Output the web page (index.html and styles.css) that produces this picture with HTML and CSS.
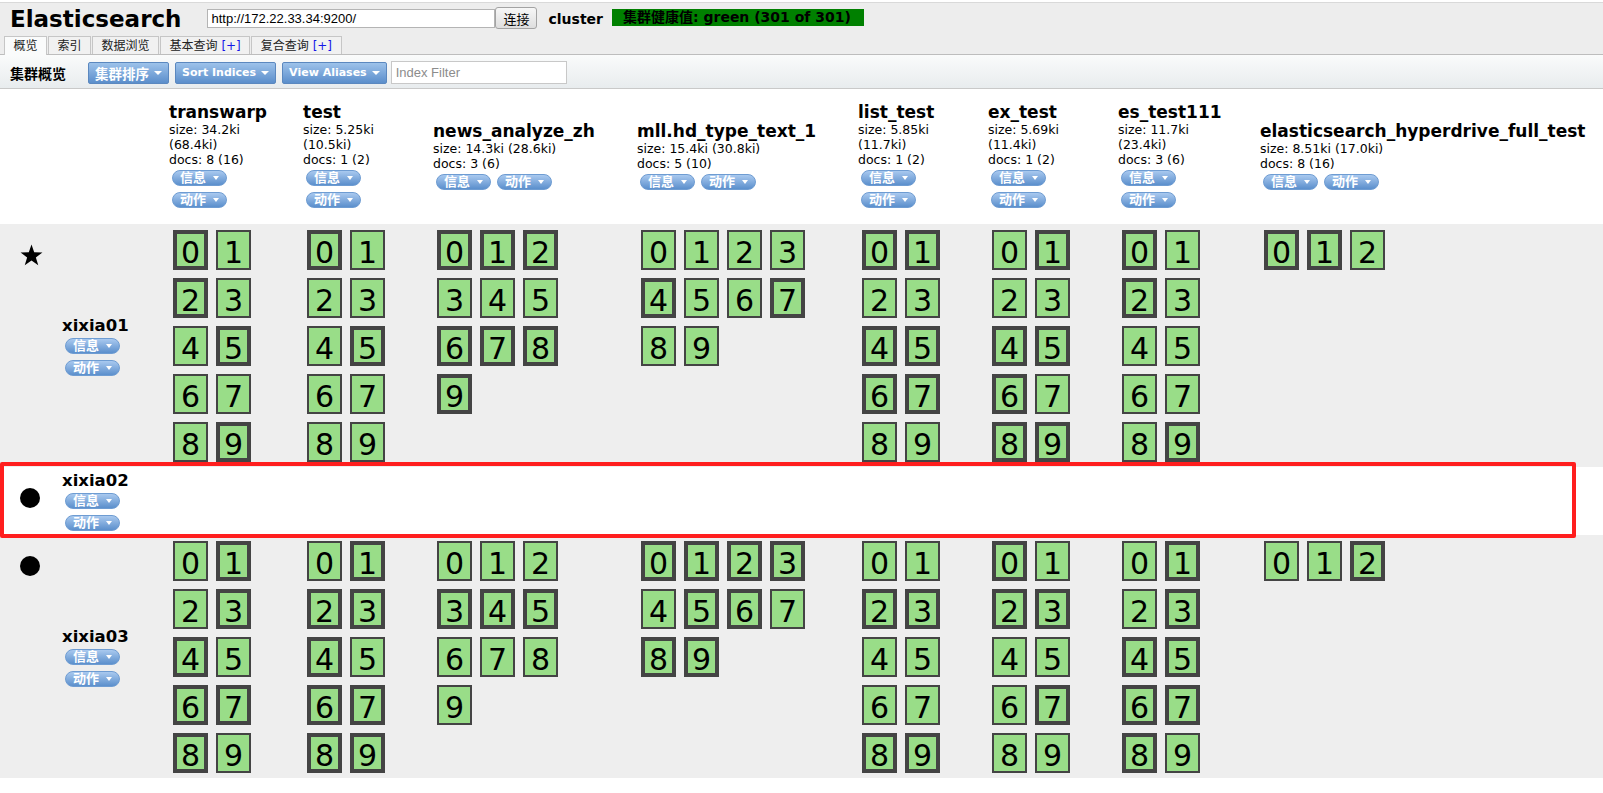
FILE: index.html
```html
<!DOCTYPE html>
<html lang="zh">
<head>
<meta charset="utf-8">
<title>Elasticsearch</title>
<link rel="stylesheet" href="styles.css">
</head>
<body>
<header class="app-header">
  <div class="header-top">
    <h1 class="logo">Elasticsearch</h1>
    <input class="url-input" type="text" value="http://172.22.33.34:9200/">
    <button class="connect-btn">连接</button>
    <span class="cluster-name">cluster</span>
    <span class="health">集群健康值: green (301 of 301)</span>
  </div>
  <nav class="tabs">
    <span class="tab active">概览</span>
    <span class="tab">索引</span>
    <span class="tab">数据浏览</span>
    <span class="tab">基本查询 <span class="plus">[+]</span></span>
    <span class="tab">复合查询 <span class="plus">[+]</span></span>
  </nav>
</header>

<div class="toolbar">
  <span class="toolbar-title">集群概览</span>
  <span class="tb-btn"><span class="tb-cjk">集群排序</span><i class="caret"></i></span>
  <span class="tb-btn">Sort Indices<i class="caret"></i></span>
  <span class="tb-btn">View Aliases<i class="caret"></i></span>
  <input class="filter" type="text" placeholder="Index Filter">
</div>

<main class="overview">
  <div class="ov-row ov-head">
    <div></div>
    <div></div>
    <div class="ix-head w2">
      <div class="ix-name">transwarp</div>
      <div class="ix-stat">size: 34.2ki (68.4ki)</div>
      <div class="ix-stat">docs: 8 (16)</div>
      <div class="pills"><span class="pill">信息<i class="caret"></i></span><span class="pill">动作<i class="caret"></i></span></div>
    </div>
    <div class="ix-head w2">
      <div class="ix-name">test</div>
      <div class="ix-stat">size: 5.25ki (10.5ki)</div>
      <div class="ix-stat">docs: 1 (2)</div>
      <div class="pills"><span class="pill">信息<i class="caret"></i></span><span class="pill">动作<i class="caret"></i></span></div>
    </div>
    <div class="ix-head w3">
      <div class="ix-name">news_analyze_zh</div>
      <div class="ix-stat">size: 14.3ki (28.6ki)</div>
      <div class="ix-stat">docs: 3 (6)</div>
      <div class="pills"><span class="pill">信息<i class="caret"></i></span><span class="pill">动作<i class="caret"></i></span></div>
    </div>
    <div class="ix-head w4">
      <div class="ix-name">mll.hd_type_text_1</div>
      <div class="ix-stat">size: 15.4ki (30.8ki)</div>
      <div class="ix-stat">docs: 5 (10)</div>
      <div class="pills"><span class="pill">信息<i class="caret"></i></span><span class="pill">动作<i class="caret"></i></span></div>
    </div>
    <div class="ix-head w2">
      <div class="ix-name">list_test</div>
      <div class="ix-stat">size: 5.85ki (11.7ki)</div>
      <div class="ix-stat">docs: 1 (2)</div>
      <div class="pills"><span class="pill">信息<i class="caret"></i></span><span class="pill">动作<i class="caret"></i></span></div>
    </div>
    <div class="ix-head w2">
      <div class="ix-name">ex_test</div>
      <div class="ix-stat">size: 5.69ki (11.4ki)</div>
      <div class="ix-stat">docs: 1 (2)</div>
      <div class="pills"><span class="pill">信息<i class="caret"></i></span><span class="pill">动作<i class="caret"></i></span></div>
    </div>
    <div class="ix-head w2">
      <div class="ix-name">es_test111</div>
      <div class="ix-stat">size: 11.7ki (23.4ki)</div>
      <div class="ix-stat">docs: 3 (6)</div>
      <div class="pills"><span class="pill">信息<i class="caret"></i></span><span class="pill">动作<i class="caret"></i></span></div>
    </div>
    <div class="ix-head w3">
      <div class="ix-name">elasticsearch_hyperdrive_full_test</div>
      <div class="ix-stat">size: 8.51ki (17.0ki)</div>
      <div class="ix-stat">docs: 8 (16)</div>
      <div class="pills"><span class="pill">信息<i class="caret"></i></span><span class="pill">动作<i class="caret"></i></span></div>
    </div>
  </div>

  <div class="ov-row ov-node shaded">
    <div class="node-icon"><svg class="star" width="23" height="22" viewBox="0 0 23 22"><polygon points="11.5,0.5 14.2,8.28 22.44,8.45 15.87,13.42 18.26,21.3 11.5,16.6 4.74,21.3 7.13,13.42 0.56,8.45 8.8,8.28"/></svg></div>
    <div class="node-cell">
      <div class="node-name">xixia01</div>
      <span class="pill">信息<i class="caret"></i></span>
      <span class="pill">动作<i class="caret"></i></span>
    </div>
    <div class="shards c2"><span class="shard p">0</span><span class="shard">1</span><span class="shard p">2</span><span class="shard">3</span><span class="shard">4</span><span class="shard p">5</span><span class="shard">6</span><span class="shard">7</span><span class="shard">8</span><span class="shard p">9</span></div>
    <div class="shards c2"><span class="shard p">0</span><span class="shard">1</span><span class="shard">2</span><span class="shard">3</span><span class="shard">4</span><span class="shard p">5</span><span class="shard">6</span><span class="shard">7</span><span class="shard">8</span><span class="shard">9</span></div>
    <div class="shards c3"><span class="shard p">0</span><span class="shard p">1</span><span class="shard p">2</span><span class="shard">3</span><span class="shard">4</span><span class="shard">5</span><span class="shard p">6</span><span class="shard p">7</span><span class="shard p">8</span><span class="shard p">9</span></div>
    <div class="shards c4"><span class="shard">0</span><span class="shard">1</span><span class="shard">2</span><span class="shard">3</span><span class="shard p">4</span><span class="shard">5</span><span class="shard">6</span><span class="shard p">7</span><span class="shard">8</span><span class="shard">9</span></div>
    <div class="shards c2"><span class="shard p">0</span><span class="shard p">1</span><span class="shard">2</span><span class="shard">3</span><span class="shard p">4</span><span class="shard p">5</span><span class="shard p">6</span><span class="shard p">7</span><span class="shard">8</span><span class="shard">9</span></div>
    <div class="shards c2"><span class="shard">0</span><span class="shard p">1</span><span class="shard">2</span><span class="shard">3</span><span class="shard p">4</span><span class="shard p">5</span><span class="shard p">6</span><span class="shard">7</span><span class="shard p">8</span><span class="shard p">9</span></div>
    <div class="shards c2"><span class="shard p">0</span><span class="shard">1</span><span class="shard p">2</span><span class="shard">3</span><span class="shard">4</span><span class="shard">5</span><span class="shard">6</span><span class="shard">7</span><span class="shard">8</span><span class="shard p">9</span></div>
    <div class="shards c3"><span class="shard p">0</span><span class="shard p">1</span><span class="shard">2</span></div>
  </div>

  <div class="ov-row ov-node blank">
    <div class="node-icon round"><svg class="dot" width="20" height="20" viewBox="0 0 20 20"><circle cx="10" cy="10" r="10"/></svg></div>
    <div class="node-cell">
      <div class="node-name">xixia02</div>
      <span class="pill">信息<i class="caret"></i></span>
      <span class="pill">动作<i class="caret"></i></span>
    </div>
    <div class="annot"></div>
  </div>

  <div class="ov-row ov-node shaded">
    <div class="node-icon round"><svg class="dot" width="20" height="20" viewBox="0 0 20 20"><circle cx="10" cy="10" r="10"/></svg></div>
    <div class="node-cell">
      <div class="node-name">xixia03</div>
      <span class="pill">信息<i class="caret"></i></span>
      <span class="pill">动作<i class="caret"></i></span>
    </div>
    <div class="shards c2"><span class="shard">0</span><span class="shard p">1</span><span class="shard">2</span><span class="shard p">3</span><span class="shard p">4</span><span class="shard">5</span><span class="shard p">6</span><span class="shard p">7</span><span class="shard p">8</span><span class="shard">9</span></div>
    <div class="shards c2"><span class="shard">0</span><span class="shard p">1</span><span class="shard p">2</span><span class="shard p">3</span><span class="shard p">4</span><span class="shard">5</span><span class="shard p">6</span><span class="shard p">7</span><span class="shard p">8</span><span class="shard p">9</span></div>
    <div class="shards c3"><span class="shard">0</span><span class="shard">1</span><span class="shard">2</span><span class="shard p">3</span><span class="shard p">4</span><span class="shard p">5</span><span class="shard">6</span><span class="shard">7</span><span class="shard">8</span><span class="shard">9</span></div>
    <div class="shards c4"><span class="shard p">0</span><span class="shard p">1</span><span class="shard p">2</span><span class="shard p">3</span><span class="shard">4</span><span class="shard p">5</span><span class="shard p">6</span><span class="shard">7</span><span class="shard p">8</span><span class="shard p">9</span></div>
    <div class="shards c2"><span class="shard">0</span><span class="shard">1</span><span class="shard p">2</span><span class="shard p">3</span><span class="shard">4</span><span class="shard">5</span><span class="shard">6</span><span class="shard">7</span><span class="shard p">8</span><span class="shard p">9</span></div>
    <div class="shards c2"><span class="shard p">0</span><span class="shard">1</span><span class="shard p">2</span><span class="shard p">3</span><span class="shard">4</span><span class="shard">5</span><span class="shard">6</span><span class="shard p">7</span><span class="shard">8</span><span class="shard">9</span></div>
    <div class="shards c2"><span class="shard">0</span><span class="shard p">1</span><span class="shard">2</span><span class="shard p">3</span><span class="shard p">4</span><span class="shard p">5</span><span class="shard p">6</span><span class="shard p">7</span><span class="shard p">8</span><span class="shard">9</span></div>
    <div class="shards c3"><span class="shard">0</span><span class="shard">1</span><span class="shard p">2</span></div>
  </div>
</main>
</body>
</html>
```

FILE: styles.css
```css
* { box-sizing: border-box; }
html, body { margin: 0; padding: 0; }
body {
  padding-top: 2px;
  background: #fff;
  color: #000;
  font-family: "DejaVu Sans", Verdana, "Noto Sans CJK SC", sans-serif;
  font-size: 12px;
}

/* ---------- header ---------- */
.app-header {
  height: 53px;
  background: #ededed;
  border-top: 1px solid #d9d9d9;
  border-bottom: 1px solid #bdbdbd;
}
.header-top {
  display: flex;
  align-items: flex-start;
  height: 33px;
  padding: 2px 0 0 10px;
}
.logo {
  margin: 0 26px 0 0;
  font-size: 23px;
  line-height: 28px;
  font-weight: bold;
}
.url-input {
  width: 288px;
  height: 19px;
  margin: 4px 0 0 0;
  padding: 0 3px;
  border: 1px solid #b4b4b4;
  background: #fff;
  font-family: "Liberation Sans", Arial, sans-serif;
  font-size: 13px;
  color: #000;
  outline: none;
}
.connect-btn {
  width: 42px;
  height: 22px;
  margin: 2px 0 0 0;
  padding: 0;
  border: 1px solid #a3a3a3;
  border-radius: 3px;
  background: linear-gradient(#f7f7f7, #dedede);
  font-family: "Noto Sans CJK SC", sans-serif;
  font-size: 13px;
  color: #000;
}
.cluster-name {
  margin: 6px 0 0 11px;
  font-size: 14px;
  line-height: 17px;
  font-weight: bold;
}
.health {
  margin: 4px 0 0 9px;
  height: 17px;
  padding: 0 13px 0 11px;
  background: #008000;
  font-size: 14px;
  line-height: 17px;
  font-weight: bold;
  color: #000;
}

.tabs {
  display: flex;
  height: 18px;
  padding-left: 4px;
}
.tab {
  height: 18px;
  margin-right: 1px;
  padding: 0 8.5px;
  border: 1px solid #c6c6c6;
  border-bottom: none;
  background: #f1f1f1;
  font-size: 12px;
  line-height: 18px;
  color: #222;
}
.tab.active {
  height: 19px;
  background: #fafbfb;
}
.plus { color: #1515e8; }

/* ---------- toolbar ---------- */
.toolbar {
  display: flex;
  align-items: center;
  height: 34px;
  padding: 2px 0 0 10px;
  background: linear-gradient(#fafbfb, #e8ecee);
  border-bottom: 1px solid #c9c9c9;
}
.toolbar-title {
  margin-right: 16px;
  font-size: 14px;
  font-weight: bold;
}
.tb-btn {
  display: flex;
  align-items: center;
  height: 22px;
  margin-left: 6px;
  padding: 0 6px;
  border: 1px solid #5b88bf;
  border-radius: 2px;
  background: linear-gradient(#9dc2ea, #5b8ecb);
  color: #fff;
  font-size: 11px;
  font-weight: bold;
}
.tb-cjk { font-size: 13.5px; }
.tb-btn .caret { margin-left: 5px; border-left-width: 4px; border-right-width: 4px; }
.filter {
  width: 176px;
  height: 23px;
  margin-left: 4px;
  padding: 0 4px;
  border: 1px solid #c8c8c8;
  background: #fff;
  font-family: "Liberation Sans", Arial, sans-serif;
  font-size: 13px;
  outline: none;
}
.filter::placeholder { color: #8c8c8c; }

.caret {
  display: inline-block;
  width: 0;
  height: 0;
  border-left: 3px solid transparent;
  border-right: 3px solid transparent;
  border-top: 4px solid #fff;
}

/* ---------- overview table ---------- */
.ov-row {
  display: grid;
  grid-template-columns: 62px 107px 134px 130px 204px 221px 130px 130px 142px 1fr;
}
.ov-head {
  min-height: 135px;
  align-items: center;
  background: #fff;
}
.ov-node.shaded { background: #eeeeee; }
.ov-node.blank { background: #fff; position: relative; }

.ix-head.w2 { width: 90px; }
.ix-head.w3 { width: 129px; }
.ix-head.w4 { width: 172px; }
.ix-name {
  font-size: 17px;
  line-height: 20px;
  font-weight: bold;
  white-space: nowrap;
}
.ix-stat {
  font-size: 12.5px;
  line-height: 15px;
}
.pills { display: flex; flex-wrap: wrap; }

.pill {
  display: inline-flex;
  align-items: center;
  width: 55px;
  height: 16px;
  margin: 3px;
  padding-left: 7px;
  border: 1px solid #6e9cd2;
  border-radius: 8px;
  background: linear-gradient(#a9c9ef, #5b8fcc);
  color: #fff;
  font-size: 13px;
  line-height: 16px;
  font-weight: bold;
  overflow: hidden;
}
.pill .caret { margin-left: 7px; }

.node-icon {
  align-self: start;
  padding: 20px 0 0 20px;
}
.node-icon.round { padding-top: 21px; }
.node-icon svg { display: block; fill: #000; }
.node-cell {
  align-self: center;
  display: flex;
  flex-direction: column;
  align-items: flex-start;
  padding: 5px 0 1px;
}
.node-name {
  font-size: 16.5px;
  line-height: 18px;
  font-weight: bold;
}

.shards {
  display: grid;
  grid-template-columns: repeat(2, 35px);
  gap: 8px;
  align-self: start;
  align-content: start;
  padding: 6px 0 5px 4px;
}
.shards.c3 { grid-template-columns: repeat(3, 35px); }
.shards.c4 { grid-template-columns: repeat(4, 35px); }
.shard {
  height: 40px;
  padding-top: 6px;
  border: 2px solid #444;
  background: #99dd88;
  font-size: 30px;
  line-height: 30px;
  text-align: center;
}
.shard.p {
  padding-top: 4px;
  border-width: 4px;
}

.annot {
  position: absolute;
  left: 0;
  top: -5px;
  width: 1576px;
  height: 76px;
  border: 4px solid #ff1e1e;
  border-radius: 2px;
  pointer-events: none;
}
```
